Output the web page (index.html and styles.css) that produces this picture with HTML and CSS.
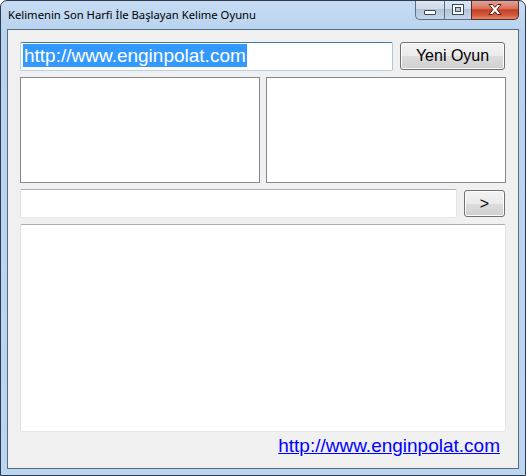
FILE: index.html
```html
<!DOCTYPE html>
<html>
<head>
<meta charset="utf-8">
<link rel="stylesheet" href="styles.css">
</head>
<body>
<div class="window">
  <div class="titlebar">
    <div class="title">Kelimenin Son Harfi İle Başlayan Kelime Oyunu</div>
    <div class="caption-buttons">
      <div class="cbtn cbtn-min">
        <svg width="14" height="8" viewBox="0 0 14 8"><rect x="1.5" y="3.5" width="11" height="4" rx="0.5" fill="#fff" stroke="#3a4a5e"/></svg>
      </div>
      <div class="cbtn cbtn-max">
        <svg width="14" height="11" viewBox="0 0 14 11"><rect x="1.5" y="0.5" width="11" height="10" fill="#fff" stroke="#3a4a5e"/><rect x="4.5" y="3.5" width="5" height="4" fill="#b8c8da" stroke="#3a4a5e"/></svg>
      </div>
      <div class="cbtn cbtn-close">
        <svg width="16" height="11" viewBox="0 0 16 11"><path d="M2 0.5 H5.5 L8 3.3 L10.5 0.5 H14 L10 5.5 L14 10.5 H10.5 L8 7.7 L5.5 10.5 H2 L6 5.5 Z" fill="#fff" stroke="#5a1a10" stroke-width="1" stroke-linejoin="round"/></svg>
      </div>
    </div>
  </div>
  <div class="frame">
    <div class="client">
      <div class="row row-top">
        <div class="textbox url-box"><span class="selected">http://www.enginpolat.com</span></div>
        <div class="button new-game">Yeni Oyun</div>
      </div>
      <div class="row row-lists">
        <div class="listbox"></div>
        <div class="listbox"></div>
      </div>
      <div class="row row-input">
        <div class="textbox input-box"></div>
        <div class="button send">&gt;</div>
      </div>
      <div class="memo"></div>
      <div class="footer">
        <span class="link">http://www.enginpolat.com</span>
      </div>
    </div>
  </div>
</div>
</body>
</html>
```

FILE: styles.css
```css
* { box-sizing: border-box; }
html, body { margin: 0; padding: 0; background: #fff; }
body { width: 526px; height: 476px; overflow: hidden; }

.window {
  width: 526px;
  height: 476px;
  border: 1px solid #2b3a4c;
  border-radius: 7px 7px 0 0;
  background: linear-gradient(to bottom, #c7dcf3 0px, #b9d3ef 30px, #bcd6f2 100%);
  display: flex;
  flex-direction: column;
  overflow: hidden;
}

.titlebar {
  height: 28px;
  display: flex;
  justify-content: space-between;
  align-items: flex-start;
  padding-left: 7px;
  padding-right: 6px;
}

.title {
  font-family: "Noto Sans", "DejaVu Sans", sans-serif;
  font-size: 11.25px;
  color: #000;
  padding-top: 6px;
  line-height: 16px;
  white-space: nowrap;
}

.caption-buttons {
  display: flex;
  margin-top: -1px;
}

.cbtn {
  height: 20px;
  display: flex;
  align-items: center;
  justify-content: center;
  border: 1px solid #5b6f88;
  border-top: none;
}
.cbtn-min {
  width: 29px;
  border-radius: 0 0 0 5px;
  border-right: none;
  background: linear-gradient(to bottom, #dfe8f3 0%, #cfdbe9 45%, #b3c4d8 50%, #c5d6ea 100%);
  padding-top: 2px;
}
.cbtn-max {
  width: 27px;
  background: linear-gradient(to bottom, #dfe8f3 0%, #cfdbe9 45%, #b3c4d8 50%, #c5d6ea 100%);
  border-right: none;
}
.cbtn-close {
  width: 48px;
  border-radius: 0 0 5px 0;
  border-color: #5a2a22;
  background: linear-gradient(to bottom, #e9a899 0%, #d8715c 45%, #c43f23 52%, #d35a3c 80%, #e48a6c 100%);
}

.frame {
  flex: 1;
  padding: 0 6px 6px 6px;
  display: flex;
}

.client {
  flex: 1;
  border: 1px solid #566b84;
  background: #f0f0f0;
  padding: 12px 12px 0 12px;
  display: flex;
  flex-direction: column;
}

.row { display: flex; }

.row-top { height: 29px; align-items: flex-start; }

.textbox {
  background: #fff;
  border: 1px solid #abadb3;
  border-color: #abadb3 #e2e3ea #e3e9ef #dbdfe6;
  border-radius: 2px;
}

.url-box {
  width: 373px;
  height: 29px;
  border-color: #3d7bad #a4c9e3 #b5cfe7 #b5cfe7;
  padding: 1px 2px;
  font-family: "Liberation Sans", Arial, sans-serif;
  font-size: 19px;
  line-height: 23px;
  white-space: nowrap;
}
.selected {
  background: #3399ff;
  color: #fff;
  display: inline-block;
  padding: 0 1px;
}

.button {
  border: 1px solid #707070;
  border-radius: 3px;
  background: linear-gradient(to bottom, #f2f2f2 0%, #ebebeb 50%, #dddddd 50%, #cfcfcf 100%);
  box-shadow: inset 0 0 0 1px #fcfcfc;
  font-family: "Liberation Sans", Arial, sans-serif;
  color: #000;
  display: flex;
  align-items: center;
  justify-content: center;
}

.new-game {
  width: 105px;
  height: 28px;
  margin-left: 7px;
  font-size: 16px;
}

.row-lists {
  height: 106px;
  margin-top: 6px;
  gap: 6px;
}
.listbox {
  flex: 1;
  background: #fff;
  border: 1px solid #828790;
}

.row-input {
  height: 29px;
  margin-top: 6px;
  align-items: flex-start;
}
.input-box {
  width: 437px;
  height: 29px;
}
.send {
  width: 41px;
  height: 27px;
  margin-left: 7px;
  margin-top: 1px;
  font-size: 16px;
}

.memo {
  height: 208px;
  margin-top: 6px;
  background: #fff;
  border: 1px solid #abadb3;
  border-color: #abadb3 #e2e3ea #e3e9ef #dbdfe6;
  border-radius: 2px;
}

.footer {
  display: flex;
  justify-content: flex-end;
  padding-right: 6px;
  margin-top: 3px;
}
.link {
  font-family: "Liberation Sans", Arial, sans-serif;
  font-size: 19px;
  line-height: 22px;
  color: #0000ff;
  text-decoration: underline;
}
```
